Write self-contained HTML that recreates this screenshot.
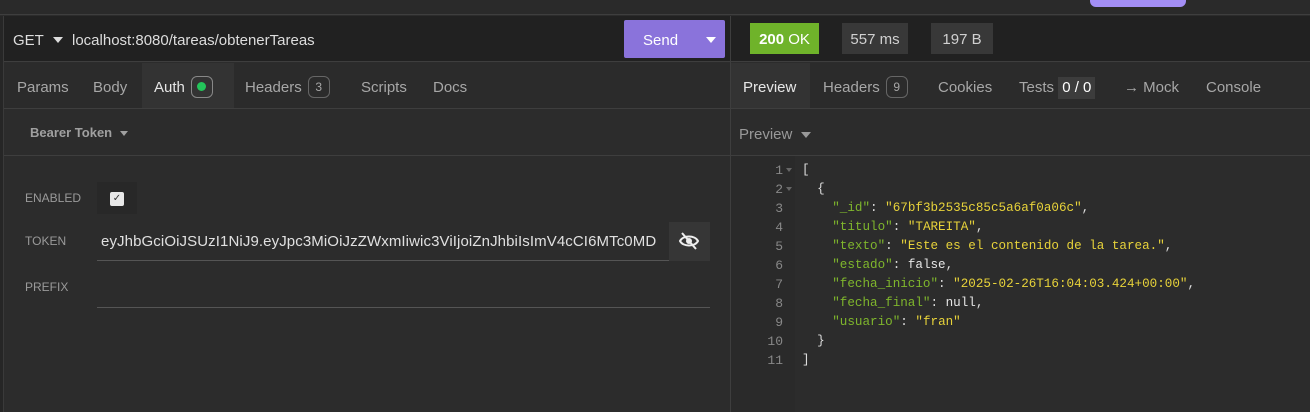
<!DOCTYPE html>
<html><head><style>
*{box-sizing:border-box;margin:0;padding:0}
body{width:1310px;height:412px;background:#2c2c2c;font-family:"Liberation Sans",sans-serif;color:#bdbdbd;position:relative;overflow:hidden;font-size:15px}
.a{position:absolute}
.top{left:0;top:0;width:1310px;height:15px;background:#2a2a2a;border-bottom:1px solid #3e3e3e}
.pill{left:1090px;top:0;width:96px;height:7px;background:#a38ef5;border-radius:0 0 6px 6px}
.urlrow{left:4px;top:16px;width:726px;height:46px;background:#212121;border-bottom:1px solid #3e3e3e}
.resrow{left:731px;top:16px;width:579px;height:46px;background:#212121;border-bottom:1px solid #3e3e3e}
.tabs{top:63px;height:46px;border-bottom:1px solid #3e3e3e;background:#2b2b2b}
.tab{position:absolute;top:2px;height:43px;line-height:46px;color:#a7a7a7}
.badge{display:inline-block;border:1px solid #666;border-radius:6px;width:22px;height:22px;line-height:20px;text-align:center;font-size:12px;vertical-align:middle;margin-left:6px;margin-top:-3px}
.lbl{font-size:12px;color:#9a9a9a}
.code{font-family:"Liberation Mono",monospace;font-size:12.6px;line-height:19px;white-space:pre}
.k{color:#7fb62c}.s{color:#e8d33a}.w{color:#e6e6e6}
.tri{display:inline-block;width:0;height:0;border-left:5px solid transparent;border-right:5px solid transparent;border-top:6px solid currentColor;vertical-align:middle}
</style></head><body>
<div class="a top"></div>
<div class="a pill"></div>
<div class="a" style="left:0;top:16px;width:4px;height:396px;background:#262626;border-right:1px solid #3a3a3a"></div>
<div class="a" style="left:730px;top:16px;width:1px;height:396px;background:#3e3e3e"></div>
<div class="a urlrow">
 <span class="a" style="left:9px;top:16px;color:#ddd">GET</span>
 <span class="a" style="left:49px;top:15px;color:#ddd"><span class="tri"></span></span>
 <span class="a" style="left:68px;top:16px;color:#ddd">localhost:8080/tareas/obtenerTareas</span>
 <div class="a" style="left:620px;top:4px;width:101px;height:38px;background:#8a73db;border-radius:2px;color:#fff">
  <span class="a" style="left:19px;top:12px">Send</span><span class="a" style="left:82px;top:11px"><span class="tri"></span></span></div>
</div>
<div class="a resrow">
 <div class="a" style="left:19px;top:7px;width:69px;height:31px;background:#6fb32a;color:#fff;line-height:33px;text-align:center"><b>200</b> OK</div>
 <div class="a" style="left:111px;top:7px;width:66px;height:31px;background:#383838;color:#d0d0d0;line-height:33px;text-align:center">557 ms</div>
 <div class="a" style="left:200px;top:7px;width:62px;height:31px;background:#383838;color:#d0d0d0;line-height:33px;text-align:center">197 B</div>
</div>
<div class="a tabs" style="left:4px;width:726px">
 <span class="tab" style="left:13px">Params</span>
 <span class="tab" style="left:89px">Body</span>
 <div class="a" style="left:138px;top:0;width:92px;height:45px;background:#333"></div>
 <span class="tab" style="left:150px;color:#e6e6e6">Auth<span class="badge" style="border-color:#888"><span style="display:inline-block;width:9px;height:9px;border-radius:50%;background:#23c45a;vertical-align:middle;margin-top:-2px"></span></span></span>
 <span class="tab" style="left:241px">Headers<span class="badge">3</span></span>
 <span class="tab" style="left:357px">Scripts</span>
 <span class="tab" style="left:429px">Docs</span>
</div>
<div class="a tabs" style="left:731px;width:579px">
 <div class="a" style="left:0;top:0;width:79px;height:45px;background:#333"></div>
 <span class="tab" style="left:12px;color:#e6e6e6">Preview</span>
 <span class="tab" style="left:92px">Headers<span class="badge">9</span></span>
 <span class="tab" style="left:207px">Cookies</span>
 <span class="tab" style="left:288px">Tests <span style="display:inline-block;background:#3c3c3c;color:#fff;padding:0 4px;line-height:22px">0 / 0</span></span>
 <span class="tab" style="left:393px">→ Mock</span>
 <span class="tab" style="left:475px">Console</span>
</div>
<div class="a" style="left:4px;top:109px;width:726px;height:47px;border-bottom:1px solid #3e3e3e">
 <span class="a" style="left:26px;top:16px;font-size:13px;font-weight:bold;color:#a0a0a0">Bearer Token <span class="tri" style="margin-left:4px;border-width:5px 4px 0 4px"></span></span>
</div>
<div class="a" style="left:731px;top:109px;width:579px;height:47px;border-bottom:1px solid #3e3e3e">
 <span class="a" style="left:8px;top:17px;color:#999">Preview <span class="tri" style="margin-left:4px"></span></span>
</div>
<span class="a lbl" style="left:25px;top:191px">ENABLED</span>
<div class="a" style="left:97px;top:182px;width:40px;height:32px;background:#282828"></div>
<div class="a" style="left:110px;top:192px;width:14px;height:14px;background:#e8e8e8;border-radius:2px;color:#333;font-size:10px;text-align:center;line-height:14px">✓</div>
<span class="a lbl" style="left:25px;top:234px">TOKEN</span>
<div class="a" style="left:97px;top:260px;width:572px;height:1px;background:#555"></div>
<span class="a" style="left:101px;top:233px;color:#e0e0e0;width:566px;overflow:hidden;white-space:nowrap;font-size:15px;letter-spacing:0.1px">eyJhbGciOiJSUzI1NiJ9.eyJpc3MiOiJzZWxmIiwic3ViIjoiZnJhbiIsImV4cCI6MTc0MD</span>
<div class="a" style="left:669px;top:222px;width:41px;height:39px;background:#363636"></div>
<svg class="a" style="left:678px;top:231px" width="22" height="20" viewBox="0 0 22 20"><path d="M2 10C5 4 17 4 20 10C17 16 5 16 2 10Z" fill="none" stroke="#eee" stroke-width="2"/><circle cx="11" cy="10" r="3" fill="#eee"/><path d="M4 2L18 18" stroke="#eee" stroke-width="2"/></svg>
<span class="a lbl" style="left:25px;top:280px">PREFIX</span>
<div class="a" style="left:97px;top:307px;width:613px;height:1px;background:#555"></div>
<div class="a" style="left:731px;top:156px;width:64px;height:256px;background:#2a2a2a"></div>
<div class="a code" style="left:731px;top:161px;width:52px;text-align:right;color:#888;font-size:13px">1
2
3
4
5
6
7
8
9
10
11</div>
<div class="a" style="left:786px;top:168px;color:#666"><span class="tri" style="display:block;border-width:4px 3px 0 3px"></span><span class="tri" style="display:block;border-width:4px 3px 0 3px;margin-top:15px"></span></div>
<div class="a code" style="left:802px;top:161px;color:#ddd">[
  {
    <span class="k">"_id"</span>: <span class="s">"67bf3b2535c85c5a6af0a06c"</span>,
    <span class="k">"titulo"</span>: <span class="s">"TAREITA"</span>,
    <span class="k">"texto"</span>: <span class="s">"Este es el contenido de la tarea."</span>,
    <span class="k">"estado"</span>: <span class="w">false</span>,
    <span class="k">"fecha_inicio"</span>: <span class="s">"2025-02-26T16:04:03.424+00:00"</span>,
    <span class="k">"fecha_final"</span>: <span class="w">null</span>,
    <span class="k">"usuario"</span>: <span class="s">"fran"</span>
  }
]</div>
</body></html>
